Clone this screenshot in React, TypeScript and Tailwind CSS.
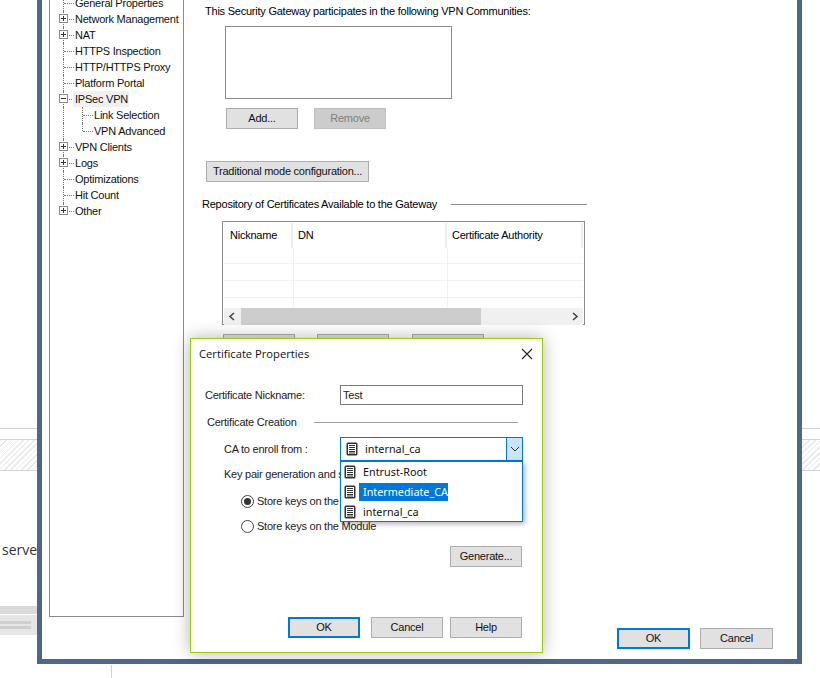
const font = "font-['Liberation_Sans',sans-serif]";

const treeRows = [
  { label: "General Properties", box: "" },
  { label: "Network Management", box: "+" },
  { label: "NAT", box: "+" },
  { label: "HTTPS Inspection", box: "" },
  { label: "HTTP/HTTPS Proxy", box: "" },
  { label: "Platform Portal", box: "" },
  { label: "IPSec VPN", box: "-" },
  { label: "Link Selection", box: "", child: true },
  { label: "VPN Advanced", box: "", child: true },
  { label: "VPN Clients", box: "+" },
  { label: "Logs", box: "+" },
  { label: "Optimizations", box: "" },
  { label: "Hit Count", box: "" },
  { label: "Other", box: "+", last: true },
];

function TreeRow({ row, index }: { row: (typeof treeRows)[number]; index: number }) {
  return (
    <div className="relative flex h-4 items-center">
      <div
        className={`absolute left-[13px] top-0 border-l border-dotted border-[#777] ${row.last ? "h-2" : "h-4"}`}
      />
      {row.child ? (
        <>
          <div
            className={`absolute left-[32px] top-0 border-l border-dotted border-[#777] ${index === 8 ? "h-2" : "h-4"}`}
          />
          <div className="absolute left-[33px] top-2 w-[10px] border-t border-dotted border-[#777]" />
        </>
      ) : (
        <div className="absolute left-[14px] top-2 w-[10px] border-t border-dotted border-[#777]" />
      )}
      {row.box && (
        <div className="absolute left-[9px] top-[3px] flex h-[9px] w-[9px] items-center justify-center border border-[#8c8c8c] bg-white">
          <div className="h-px w-[5px] bg-[#333]" />
          {row.box === "+" && <div className="absolute h-[5px] w-px bg-[#333]" />}
        </div>
      )}
      <span
        className={`relative whitespace-nowrap text-[#111] ${row.child ? "ml-[44px]" : row.box === "-" ? "ml-[23px] w-[56px] bg-[#f0f0f0] pl-[2px] leading-4" : "ml-[25px]"}`}
      >
        {row.label}
      </span>
    </div>
  );
}

function Btn({
  label,
  className = "",
  focused = false,
  disabled = false,
}: {
  label?: string;
  className?: string;
  focused?: boolean;
  disabled?: boolean;
}) {
  return (
    <div
      className={`flex h-[21px] w-[72px] shrink-0 items-center justify-center whitespace-nowrap ${
        focused
          ? "border-2 border-[#0078d7] bg-[#e1e1e1] text-[#111]"
          : disabled
            ? "border border-[#bfbfbf] bg-[#cccccc] text-[#7f7f7f]"
            : "border border-[#adadad] bg-[#e1e1e1] text-[#111]"
      } ${className}`}
    >
      {label}
    </div>
  );
}

function CertIcon({ className = "" }: { className?: string }) {
  return (
    <svg width="12" height="14" viewBox="0 0 12 14" className={`shrink-0 ${className}`}>
      <rect x="0.5" y="0.5" width="11" height="13" rx="1.5" fill="#333" />
      <rect x="2" y="2" width="8" height="10" fill="#fff" />
      <path d="M3 3.5h6M3 5.5h6M3 7.5h6M3 9.5h6" stroke="#333" strokeWidth="1" />
      <rect x="3" y="10.5" width="6" height="1" fill="#333" />
    </svg>
  );
}

function Radio({ checked = false }: { checked?: boolean }) {
  return (
    <div className="flex h-[13px] w-[13px] shrink-0 items-center justify-center rounded-full border border-[#444] bg-white">
      {checked && <div className="h-[7px] w-[7px] rounded-full bg-[#333]" />}
    </div>
  );
}

function CertificateDialog() {
  return (
    <div className="absolute left-[190px] top-[338px] h-[315px] w-[353px] border border-[#9acd0f] bg-white text-[#222] shadow-[0_0_16px_rgba(0,0,0,0.3)]">
      <div className="flex h-[30px] items-center justify-between pl-[8px] pr-[9px] font-['Open_Sans',sans-serif] text-[11.2px] tracking-normal text-[#111]">
        <span>Certificate Properties</span>
        <svg width="12" height="12" viewBox="0 0 12 12">
          <path d="M1 1l10 10M11 1L1 11" stroke="#222" strokeWidth="1.1" />
        </svg>
      </div>

      <div className="mt-[16px] flex h-5 items-center pl-[14px]">
        <span className="w-[135px]">Certificate Nickname:</span>
        <div className="flex h-5 w-[183px] items-center border border-[#7a7a7a] pl-[2px]">Test</div>
      </div>

      <div className="mt-[7px] flex h-[20px] items-center pl-[16px]">
        <span>Certificate Creation</span>
        <div className="ml-[17px] h-px w-[204px] bg-[#a0a0a0]" />
      </div>

      <div className="relative mt-[5px] flex h-6 items-center pl-[33px]">
        <span className="w-[116px]">CA to enroll from :</span>
        <div className="flex h-6 w-[183px] items-center border border-[#0078d7] pl-[5px]">
          <CertIcon />
          <span className="ml-[7px] flex-1 font-['Noto_Sans',sans-serif] text-[10.8px] tracking-normal text-[#111]">internal_ca</span>
          <div className="flex h-full w-[16px] items-center justify-center border-l border-[#0078d7] bg-[#cce4f7]">
            <svg width="10" height="6" viewBox="0 0 10 6">
              <path d="M1 1l4 4 4-4" stroke="#333" strokeWidth="1" fill="none" />
            </svg>
          </div>
        </div>

        {/* open dropdown list */}
        <div className="absolute left-[149px] top-[24px] z-10 flex h-[61px] w-[183px] flex-col justify-start gap-[2px] border border-[#0078d7] bg-white pl-[3px] pt-px font-['Noto_Sans',sans-serif] text-[10.8px] tracking-normal text-[#111] shadow-[2px_2px_5px_rgba(0,0,0,0.3)]">
          <div className="flex h-[18px] items-center">
            <CertIcon />
            <span className="ml-[3px] pl-1">Entrust-Root</span>
          </div>
          <div className="flex h-[18px] items-center">
            <CertIcon />
            <span className="ml-[3px] bg-[#0078d7] pl-1 leading-[18px] text-white">Intermediate_CA</span>
          </div>
          <div className="flex h-[18px] items-center">
            <CertIcon />
            <span className="ml-[3px] pl-1">internal_ca</span>
          </div>
        </div>
      </div>

      <div className="mt-[5px] flex h-4 items-center pl-[33px]">Key pair generation and storage</div>

      <div className="mt-[11px] flex h-[16px] items-center gap-[3px] pl-[50px]">
        <Radio checked />
        <span>Store keys on the Computer</span>
      </div>
      <div className="mt-[9px] flex h-[16px] items-center gap-[3px] pl-[50px]">
        <Radio />
        <span>Store keys on the Module</span>
      </div>

      <div className="mt-[12px] flex justify-end pr-[20px]">
        <Btn label="Generate..." />
      </div>

      <div className="mt-[50px] flex pl-[97px]">
        <Btn label="OK" focused />
        <Btn label="Cancel" className="ml-[11px]" />
        <Btn label="Help" className="ml-[7px]" />
      </div>
    </div>
  );
}

function GatewayWindow() {
  return (
    <div className="absolute left-[37px] top-0 flex h-[664px] w-[765px] border-x-[5px] border-b-[5px] border-[#506687] bg-white">
      <div className="ml-[7px] h-[617px] w-[135px] shrink-0 overflow-hidden border-x border-b border-[#8a8a90]">
        <div className="-mt-[5px]">
          {treeRows.map((row, i) => (
            <TreeRow key={row.label} row={row} index={i} />
          ))}
        </div>
      </div>

      <div className="relative flex-1">
        <div className="ml-[21px] flex h-[20px] items-center pt-[3px]">
          This Security Gateway participates in the following VPN Communities:
        </div>
        <div className="ml-[41px] mt-[6px] h-[73px] w-[227px] border border-[#8a8a90]" />
        <div className="ml-[42px] mt-[9px] flex gap-[16px]">
          <Btn label="Add..." />
          <Btn label="Remove" disabled />
        </div>
        <Btn label="Traditional mode configuration..." className="ml-[22px] mt-[32px] !w-[163px]" />

        <div className="ml-[18px] mt-[14px] flex h-4 items-center">
          <span className="w-[249px] whitespace-nowrap">Repository of Certificates Available to the Gateway</span>
          <div className="h-px w-[136px] bg-[#8a8a8a]" />
        </div>

        <div className="ml-[38px] mt-[9px] h-[104px] w-[363px] border border-[#8a8a90] p-px">
          <div className="flex h-[25px]">
            <div className="w-[69px] border-r-2 border-[#eee] pl-[6px] pt-[7px]">Nickname</div>
            <div className="w-[154px] border-r-2 border-[#eee] pl-[5px] pt-[7px]">DN</div>
            <div className="flex-1 border-r-2 border-[#eee] pl-[5px] pt-[7px]">Certificate Authority</div>
          </div>
          {[16, 17, 17, 9].map((h, i) => (
            <div key={i} className={`flex ${i < 3 ? "border-b border-[#f0f0f0]" : ""}`} style={{ height: h }}>
              <div className="w-[70px] border-r border-[#f0f0f0]" />
              <div className="w-[154px] border-r border-[#f0f0f0]" />
              <div className="flex-1" />
            </div>
          ))}
          <div className="mt-px flex h-[17px] items-center bg-[#f0f0f0]">
            <svg width="17" height="17" viewBox="0 0 17 17" className="shrink-0">
              <path d="M10 5l-4 3.5 4 3.5" stroke="#444" strokeWidth="1.6" fill="none" />
            </svg>
            <div className="h-full w-[240px] bg-[#cdcdcd]" />
            <div className="flex-1" />
            <svg width="17" height="17" viewBox="0 0 17 17" className="shrink-0">
              <path d="M7 5l4 3.5-4 3.5" stroke="#444" strokeWidth="1.6" fill="none" />
            </svg>
          </div>
        </div>

        <div className="ml-[39px] mt-[9px] flex gap-[22px]">
          <Btn />
          <Btn className="mr-px" />
          <Btn />
        </div>
      </div>

      <div className="absolute bottom-[10px] right-[24px] flex gap-[10px]">
        <Btn label="OK" focused className="!w-[73px]" />
        <Btn label="Cancel" className="!w-[73px]" />
      </div>
    </div>
  );
}

export default function App() {
  return (
    <div className={`relative h-[678px] w-[820px] overflow-hidden bg-white text-[11px] leading-none tracking-[-0.23px] ${font}`}>
      {/* page behind the windows */}
      <div className="pt-[428px]">
        <div className="h-px bg-[#d2d2d2]" />
        <div className="mt-[10px] h-[32px] border-y border-[#d2d2d2] bg-[repeating-linear-gradient(-45deg,#e6e6e6_0,#e6e6e6_1px,#ffffff_1px,#ffffff_4px)]" />
        <div className="mt-[71px] h-4 pl-[2px] font-['Open_Sans',sans-serif] text-[14px] leading-4 tracking-normal text-[#333]">serve</div>
        <div className="mt-[48px] h-2 w-[37px] bg-[#dadada]" />
        <div className="mt-px flex h-5 w-[37px] flex-col gap-[2px] bg-[#e6e6e6] pt-[6px]">
          <div className="h-[3px] w-[31px] bg-[#cfcfcf]" />
          <div className="h-[3px] w-[31px] bg-[#cfcfcf]" />
        </div>
        <div className="ml-[111px] mt-[30px] h-[14px] w-px bg-[#d2d2d2]" />
      </div>

      <GatewayWindow />
      <CertificateDialog />
    </div>
  );
}
